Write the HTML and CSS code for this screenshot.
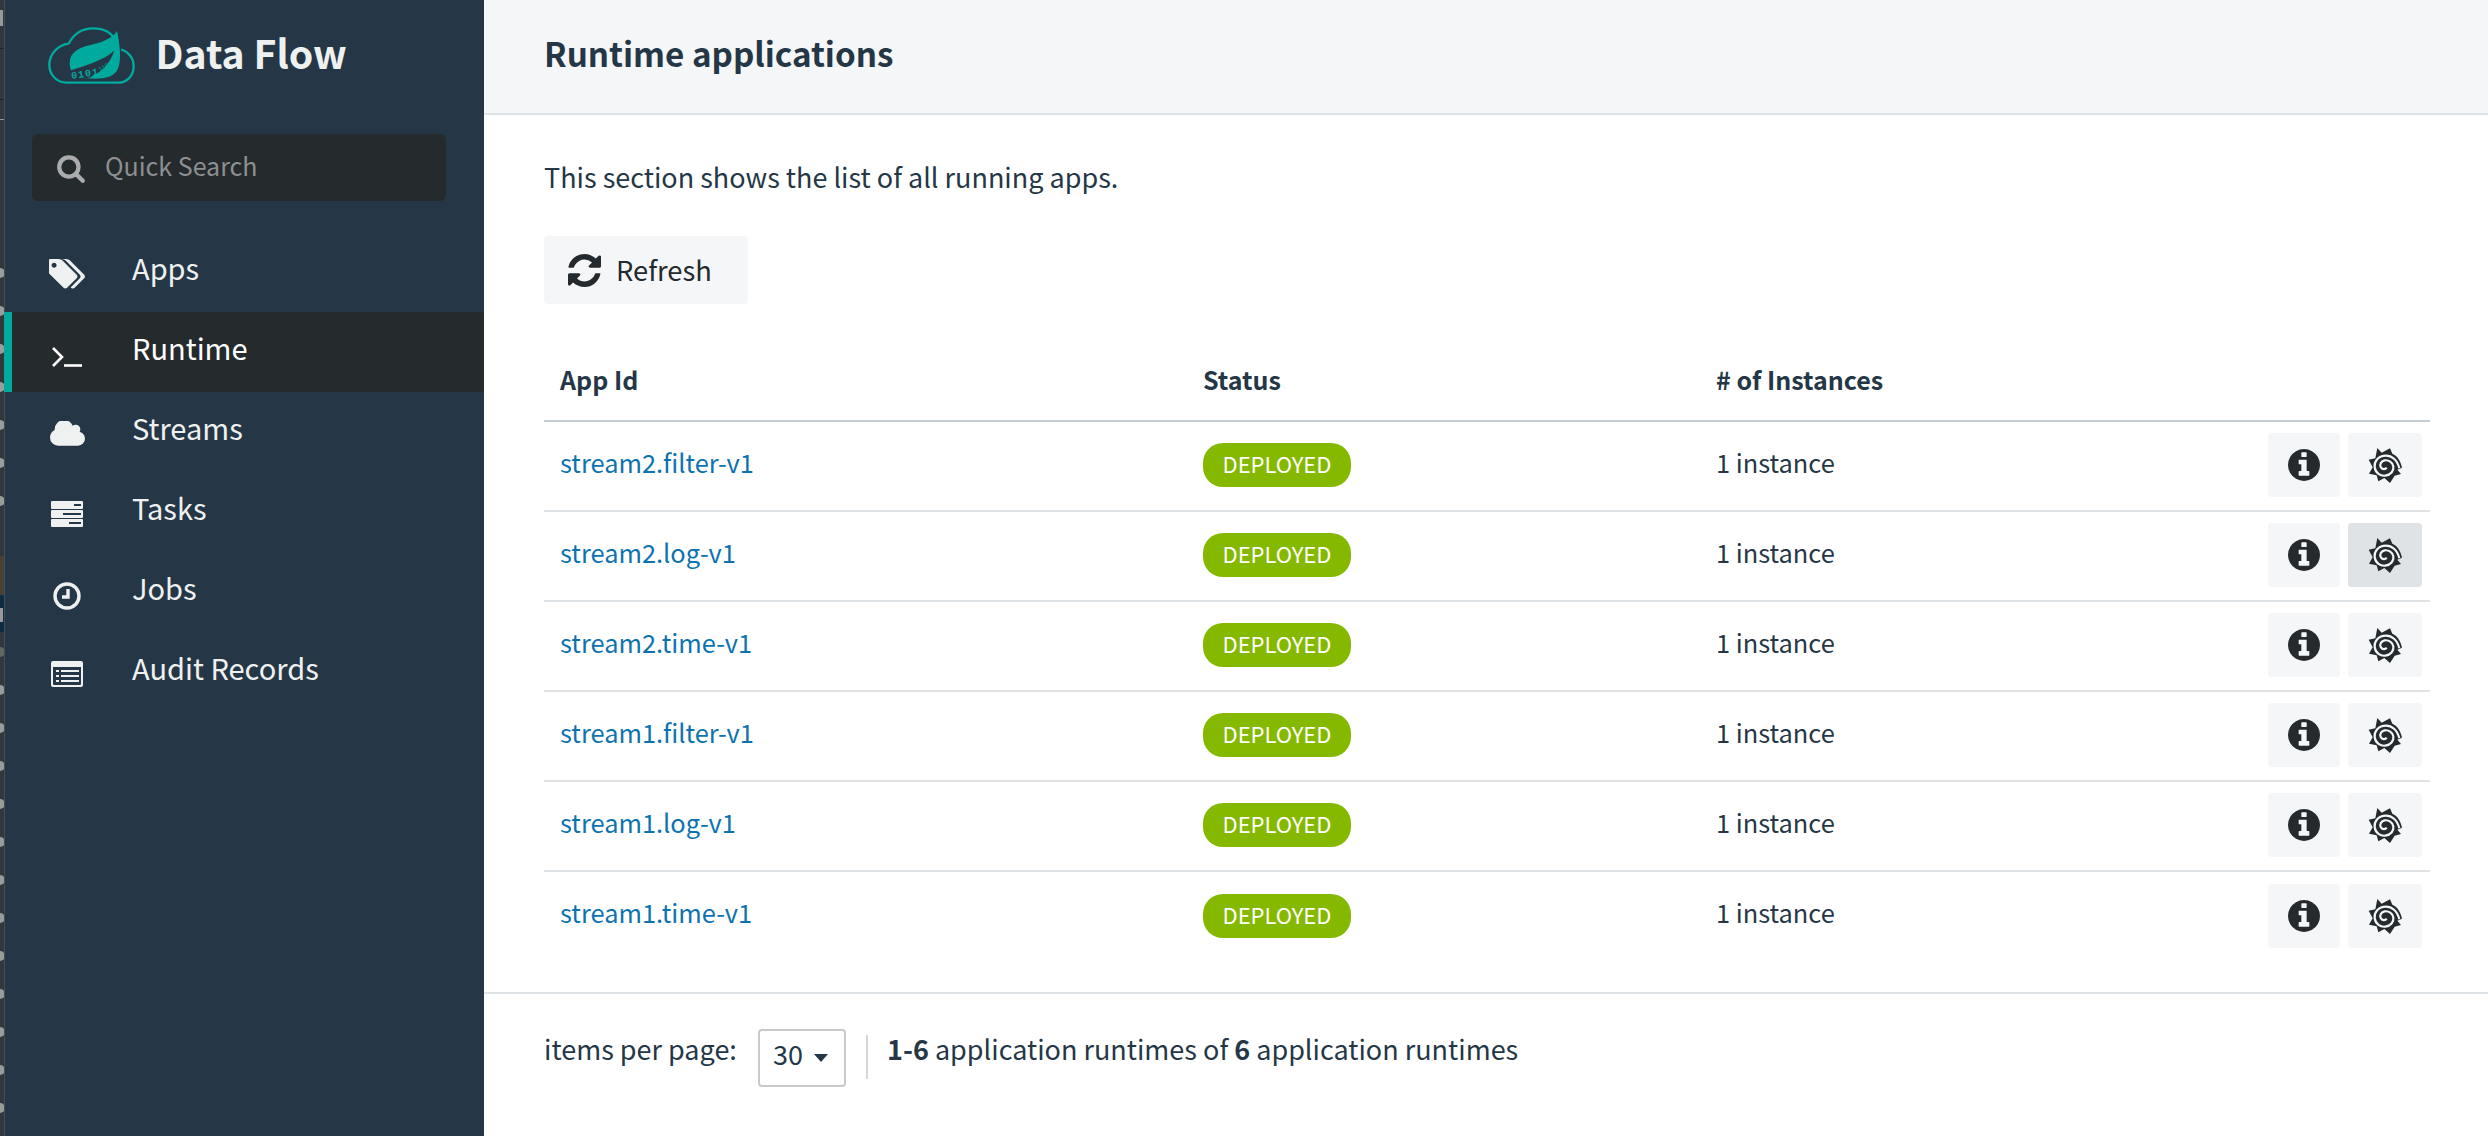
FILE: index.html
```html
<!DOCTYPE html>
<html lang="en">
<head>
<meta charset="utf-8">
<title>Runtime applications</title>
<link rel="stylesheet" href="styles.css">
</head>
<body>
<svg width="0" height="0" class="defs">
  <defs>
    <symbol id="i-info" viewBox="128 128 1536 1536"><path d="M1152 1376v-160q0-14-9-23t-23-9h-96v-512q0-14-9-23t-23-9h-320q-14 0-23 9t-9 23v160q0 14 9 23t23 9h96v320h-96q-14 0-23 9t-9 23v160q0 14 9 23t23 9h448q14 0 23-9t9-23zm-128-896v-160q0-14-9-23t-23-9h-192q-14 0-23 9t-9 23v160q0 14 9 23t23 9h192q14 0 23-9t9-23zm640 416q0 209-103 385.5t-279.5 279.5-385.5 103-385.500-103-279.500-279.500-103-385.500 103-385.500 279.500-279.500 385.500-103 385.500 103 279.500 279.500 103 385.500z"/></symbol>
    <symbol id="i-graf" viewBox="0 0 150 132">
      <path d="M52 15 L65 29 L90 16 L97 32 C112 38 122 54 126 74 L112 80 L123 93 L104 98 L90 120 L73 105 L55 115 L50 97 L27 92 L38 73 L26 50 L46 46 Z"/>
      <path class="spiral" d="M118 76 C112 50 95 38 78 38 C55 38 42 55 44 72 C46 90 62 100 76 98 C92 96 102 84 100 70 C98 58 86 50 74 52 C64 54 58 64 62 72 C66 80 76 80 80 74"/>
    </symbol>
  </defs>
</svg>

<div class="strip">
  <svg class="strip-art" width="4" height="1136" viewBox="0 0 4 1136">
    <rect y="556" width="4" height="39" fill="#4a4134"/>
    <rect y="595" width="4" height="37" fill="#0f2b40"/>
    <rect y="48" width="4" height="1" fill="#222"/>
    <rect y="99" width="4" height="1" fill="#222"/>
    <rect y="119" width="4" height="1" fill="#999"/>
    <rect y="10" width="3" height="16" fill="#999"/>
    <rect y="608" width="3" height="14" fill="#999"/>
    <g fill="#9a9c9c">
      <circle cx="0" cy="273" r="5"/><circle cx="0" cy="311" r="5"/><circle cx="0" cy="349" r="5"/><circle cx="0" cy="387" r="5"/><circle cx="0" cy="425" r="5"/><circle cx="0" cy="463" r="5"/><circle cx="0" cy="501" r="5"/>
      <circle cx="0" cy="652" r="5" fill="#666"/>
      <circle cx="0" cy="690" r="5"/><circle cx="0" cy="728" r="5"/><circle cx="0" cy="766" r="5"/><circle cx="0" cy="804" r="5"/><circle cx="0" cy="842" r="5"/><circle cx="0" cy="880" r="5"/><circle cx="0" cy="918" r="5"/><circle cx="0" cy="956" r="5"/><circle cx="0" cy="994" r="5"/><circle cx="0" cy="1032" r="5"/><circle cx="0" cy="1070" r="5"/><circle cx="0" cy="1108" r="5"/>
    </g>
  </svg>
</div>

<aside class="sidebar">
  <div class="brand">
    <svg class="logo" width="90" height="60" viewBox="140 75 270 180">
      <path class="logo-cloud" d="M205 128 C222 95 250 82 278 82 C310 82 335 95 345 120 M362 146 C385 152 400 172 400 195 C400 225 380 245 352 245 L198 245 C168 245 147 220 147 192 C147 160 172 132 205 128"/>
      <path class="logo-leaf" d="M350 90 C336 114 300 125 270 132 C235 140 208 155 208 185 C208 198 211 208 216 214 L216 235 L262 232 C300 235 340 232 352 205 C365 178 358 130 350 90 Z"/>
      <path class="logo-band" d="M342 148 C320 172 270 190 212 208 L212 238 L262 232 C300 218 330 190 342 148 Z"/>
      <text class="logo-bits" transform="translate(214 234) rotate(-9)">0101</text>
      <text class="logo-bits-small" transform="translate(298 210) rotate(-28)">1100</text>
    </svg>
    <span class="brand-name">Data Flow</span>
  </div>
  <div class="search">
    <svg class="search-icon" viewBox="0 0 1792 1792"><path d="M1216 832q0-185-131.5-316.5t-316.5-131.5-316.5 131.5-131.5 316.5 131.5 316.5 316.5 131.5 316.5-131.5 131.5-316.5zm512 832q0 52-38 90t-90 38q-54 0-90-38l-343-342q-179 124-399 124-143 0-273.5-55.5t-225-150-150-225-55.5-273.5 55.5-273.5 150-225 225-150 273.5-55.5 273.5 55.5 225 150 150 225 55.5 273.5q0 220-124 399l343 343q37 37 37 90z"/></svg>
    <span class="search-text">Quick Search</span>
  </div>
  <nav class="nav">
    <a class="nav-item">
      <span class="nav-icon"><svg width="36" height="30" viewBox="0 128 1835 1536"><path d="M384 448q0-53-37.500-90.500t-90.500-37.500-90.500 37.500-37.500 90.500 37.500 90.500 90.500 37.500 90.500-37.500 37.500-90.500zm1067 576q0 53-37 90l-491 492q-39 37-91 37-53 0-90-37l-715-716q-38-37-64.500-101t-26.500-117v-416q0-52 38-90t90-38h416q53 0 117 26.500t102 64.500l715 714q37 39 37 91zm384 0q0 53-37 90l-491 492q-39 37-91 37-36 0-59-14t-53-45l470-470q37-37 37-90 0-52-37-91l-715-714q-38-38-102-64.500t-117-26.500h224q53 0 117 26.500t102 64.500l715 714q37 39 37 91z"/></svg></span>
      <span class="nav-label">Apps</span>
    </a>
    <a class="nav-item active">
      <span class="nav-icon"><svg class="term" width="30" height="20" viewBox="0 0 30 20"><path d="M1 1 L10 10 L1 19"/><path d="M12 18.500 H30"/></svg></span>
      <span class="nav-label">Runtime</span>
    </a>
    <a class="nav-item">
      <span class="nav-icon"><svg width="35" height="26" viewBox="0 256 1920 1280"><path d="M1920 1152q0 159-112.500 271.500t-271.500 112.500h-1088q-185 0-316.500-131.500t-131.500-316.500q0-132 71-241.500t187-163.500q-2-28-2-43 0-212 150-362t362-150q158 0 286.500 88t187.500 230q70-62 166-62 106 0 181 75t75 181q0 75-41 138 129 30 213 134.500t84 239.500z"/></svg></span>
      <span class="nav-label">Streams</span>
    </a>
    <a class="nav-item">
      <span class="nav-icon"><svg width="32" height="26" viewBox="0 0 32 26"><path fill-rule="evenodd" d="M1 0H31a1 1 0 0 1 1 1V7a1 1 0 0 1-1 1H1a1 1 0 0 1-1-1V1a1 1 0 0 1 1-1ZM23 3V5H30V3ZM1 9H31a1 1 0 0 1 1 1V16a1 1 0 0 1-1 1H1a1 1 0 0 1-1-1V10a1 1 0 0 1 1-1ZM12 12V14H30V12ZM1 18H31a1 1 0 0 1 1 1V25a1 1 0 0 1-1 1H1a1 1 0 0 1-1-1V19a1 1 0 0 1 1-1ZM18 21V23H30V21Z"/></svg></span>
      <span class="nav-label">Tasks</span>
    </a>
    <a class="nav-item">
      <span class="nav-icon"><svg class="clock" width="28" height="28" viewBox="0 0 28 28"><circle cx="14" cy="14" r="12"/><path d="M15 7 V15 H9"/></svg></span>
      <span class="nav-label">Jobs</span>
    </a>
    <a class="nav-item">
      <span class="nav-icon"><svg width="32" height="26" viewBox="0 0 32 26"><path fill-rule="evenodd" d="M2 0H30a2 2 0 0 1 2 2V24a2 2 0 0 1-2 2H2a2 2 0 0 1-2-2V2a2 2 0 0 1 2-2ZM2 6V23a1 1 0 0 0 1 1H29a1 1 0 0 0 1-1V6ZM5 9H8V11H5ZM10 9H28V11H10ZM5 14H8V16H5ZM10 14H28V16H10ZM5 19H8V21H5ZM10 19H28V21H10Z"/></svg></span>
      <span class="nav-label">Audit Records</span>
    </a>
  </nav>
</aside>

<main class="main">
  <header class="page-head"><h1>Runtime applications</h1></header>
  <section class="content">
    <p class="intro">This section shows the list of all running apps.</p>
    <button class="refresh">
      <svg class="refresh-icon" viewBox="128 128 1536 1536"><path d="M1639 1056q0 5-1 7-64 268-268 434.500t-478 166.500q-146 0-282.500-55t-243.500-157l-129 129q-19 19-45 19t-45-19-19-45v-448q0-26 19-45t45-19h448q26 0 45 19t19 45-19 45l-137 137q71 66 161 102t187 36q134 0 250-65t186-179q11-17 53-117 8-23 30-23h192q13 0 22.500 9.500t9.500 22.500zm25-800v448q0 26-19 45t-45 19h-448q-26 0-45-19t-19-45 19-45l138-138q-148-137-349-137-134 0-250 65t-186 179q-11 17-53 117-8 23-30 23h-199q-13 0-22.500-9.500t-9.500-22.500v-7q65-268 270-434.500t480-166.500q146 0 284 55.500t245 156.500l130-129q19-19 45-19t45 19 19 45z"/></svg>
      <span class="refresh-text">Refresh</span>
    </button>
    <table class="apps">
      <thead>
        <tr><th class="c-id">App Id</th><th class="c-status">Status</th><th class="c-inst"># of Instances</th><th class="c-act"></th></tr>
      </thead>
      <tbody>
        <tr>
          <td><a class="cell-text app-link">stream2.filter-v1</a></td><td><span class="badge">DEPLOYED</span></td><td><span class="cell-text">1 instance</span></td>
          <td class="c-act"><div class="actions"><button class="act act-info"><svg class="ic-info"><use href="#i-info"/></svg></button><button class="act act-graf"><svg class="ic-graf"><use href="#i-graf"/></svg></button></div></td>
        </tr>
        <tr>
          <td><a class="cell-text app-link">stream2.log-v1</a></td><td><span class="badge">DEPLOYED</span></td><td><span class="cell-text">1 instance</span></td>
          <td class="c-act"><div class="actions"><button class="act act-info"><svg class="ic-info"><use href="#i-info"/></svg></button><button class="act act-graf hover"><svg class="ic-graf"><use href="#i-graf"/></svg></button></div></td>
        </tr>
        <tr>
          <td><a class="cell-text app-link">stream2.time-v1</a></td><td><span class="badge">DEPLOYED</span></td><td><span class="cell-text">1 instance</span></td>
          <td class="c-act"><div class="actions"><button class="act act-info"><svg class="ic-info"><use href="#i-info"/></svg></button><button class="act act-graf"><svg class="ic-graf"><use href="#i-graf"/></svg></button></div></td>
        </tr>
        <tr>
          <td><a class="cell-text app-link">stream1.filter-v1</a></td><td><span class="badge">DEPLOYED</span></td><td><span class="cell-text">1 instance</span></td>
          <td class="c-act"><div class="actions"><button class="act act-info"><svg class="ic-info"><use href="#i-info"/></svg></button><button class="act act-graf"><svg class="ic-graf"><use href="#i-graf"/></svg></button></div></td>
        </tr>
        <tr>
          <td><a class="cell-text app-link">stream1.log-v1</a></td><td><span class="badge">DEPLOYED</span></td><td><span class="cell-text">1 instance</span></td>
          <td class="c-act"><div class="actions"><button class="act act-info"><svg class="ic-info"><use href="#i-info"/></svg></button><button class="act act-graf"><svg class="ic-graf"><use href="#i-graf"/></svg></button></div></td>
        </tr>
        <tr>
          <td><a class="cell-text app-link">stream1.time-v1</a></td><td><span class="badge">DEPLOYED</span></td><td><span class="cell-text">1 instance</span></td>
          <td class="c-act"><div class="actions"><button class="act act-info"><svg class="ic-info"><use href="#i-info"/></svg></button><button class="act act-graf"><svg class="ic-graf"><use href="#i-graf"/></svg></button></div></td>
        </tr>
      </tbody>
    </table>
  </section>
  <footer class="pager">
    <span class="pager-text per-page">items per page:</span>
    <div class="select"><span class="select-value">30</span><i class="caret"></i></div>
    <div class="pager-sep"></div>
    <span class="pager-text summary"><b>1-6</b> application runtimes of <b>6</b> application runtimes</span>
  </footer>
</main>
</body>
</html>
```
FILE: styles.css
```css
* { box-sizing: border-box; }
html, body { margin: 0; height: 100%; }
body {
  display: flex;
  height: 1136px;
  overflow: hidden;
  background: #fff;
  color: #253746;
  font-family: "Noto Sans CJK SC", "Noto Sans", sans-serif;
  font-size: 26px;
  line-height: 36px;
}
.defs { position: absolute; }
.strip { width: 4px; flex: none; background: #32383a; }
.strip-art { display: block; }

.sidebar {
  width: 480px;
  flex: none;
  background: #253746;
  border-left: 1px solid #3c505e;
  color: #eff1f1;
}
.brand { display: flex; align-items: center; height: 114px; padding-left: 42px; }
.logo { display: block; flex: none; margin-bottom: 3px; }
.logo-cloud { fill: none; stroke: #00ab9e; stroke-width: 7; }
.logo-leaf { fill: #00ab9e; }
.logo-band { fill: #253746; }
.logo-bits { fill: #00ab9e; font-family: "Liberation Mono", monospace; font-size: 30px; font-weight: 700; letter-spacing: 3px; }
.logo-bits-small { fill: #00ab9e; font-family: "Liberation Mono", monospace; font-size: 17px; }
.brand-name { margin-left: 18.5px; font-size: 39.2px; font-weight: 700; line-height: 50px; margin-bottom: 11px; }

.search {
  display: flex;
  align-items: center;
  margin: 20px 0 0 27px;
  width: 414px;
  height: 67px;
  padding-left: 24px;
  background: #252a2d;
  border-radius: 6px;
  color: #8d9092;
  font-size: 25px;
}
.search-icon { width: 30px; height: 30px; fill: #a9abac; margin-right: 19px; flex: none; }
.search-text { margin-bottom: 6px; }

.nav { display: flex; flex-direction: column; margin-top: 31px; margin-left: -1px; }
.nav-item {
  display: flex;
  align-items: center;
  height: 80px;
  padding-left: 8px;
  font-size: 29px;
  line-height: 40px;
  border-left: 8px solid transparent;
}
.nav-item.active { background: #252a2d; border-left-color: #00ab9e; color: #fff; }
.nav-icon { display: flex; align-items: center; justify-content: center; width: 72px; margin-left: 11px; margin-right: 29px; margin-top: 4px; flex: none; }
.nav-label { margin-bottom: 10px; }
.nav-icon svg { display: block; fill: #eff1f1; }
.nav-icon .term { fill: none; stroke: #fff; stroke-width: 2.6; margin-top: 5px; }
.nav-icon .clock { fill: none; stroke: #eff1f1; stroke-width: 3.4; margin-top: 4px; }

.main { flex: 1; min-width: 0; display: flex; flex-direction: column; }
.page-head {
  height: 115px;
  flex: none;
  display: flex;
  align-items: center;
  padding-left: 60px;
  background: #f4f6f7;
  border-bottom: 2px solid #dfe3e6;
}
.page-head h1 { margin: 0 0 7px; font-size: 33.2px; line-height: 50px; font-weight: 700; color: #253746; }
.content { flex: none; height: 879px; padding: 43px 58px 0 60px; border-bottom: 2px solid #dfe3e6; }
.intro { margin: 0; font-size: 27px; line-height: 38px; }
.refresh {
  display: flex;
  align-items: center;
  gap: 15px;
  height: 68px;
  width: 204px;
  margin-top: 40px;
  padding: 0 0 0 24px;
  border: 0;
  border-radius: 4px;
  background: #f4f6f7;
  color: #242a2d;
  font: inherit;
  font-size: 27.3px;
}
.refresh-icon { width: 33px; height: 33px; fill: #242a2d; flex: none; }
.refresh-text { margin-bottom: 3px; }

.apps { width: 100%; margin-top: 24px; border-collapse: collapse; table-layout: fixed; font-size: 25.4px; }
.apps th {
  height: 93px;
  padding: 10px 0 0 16px;
  text-align: left;
  font-weight: 700;
  font-size: 25px;
  border-bottom: 2px solid #c3cdd1;
}
.apps td { height: 90px; padding: 0 0 2px 16px; border-top: 2px solid #dfe3e6; }
.apps tbody tr:first-child td { border-top: 0; }
.c-id { width: 643px; }
.c-status { width: 513px; }
.c-inst { width: 340px; }
.cell-text { display: block; margin-bottom: 7px; }
.app-link { color: #0d73b0; }
.badge {
  display: block;
  width: 148px;
  height: 44px;
  border-radius: 20px;
  background: #85b900;
  color: #fff;
  font-size: 22px;
  line-height: 41px;
  text-align: center;
}
.apps td.c-act { padding: 0 8px 2px 0; }
.actions { display: flex; justify-content: flex-end; gap: 8px; }
.act {
  display: flex;
  align-items: center;
  justify-content: center;
  height: 64px;
  padding: 0;
  border: 0;
  border-radius: 4px;
  background: #f4f6f7;
}
.act-info { width: 72px; }
.act-graf { width: 74px; }
.act-graf.hover { background: #dfe3e6; }
.ic-info { width: 32px; height: 32px; fill: #242a2d; }
.ic-graf { width: 50px; height: 44px; fill: #242a2d; }
.spiral { fill: none; stroke: #f4f6f7; stroke-width: 6.5; }
.hover .spiral { stroke: #dfe3e6; }

.pager { flex: 1; display: flex; align-items: center; padding: 0 0 14px 60px; font-size: 27px; }
.pager-text { margin-bottom: 18px; }
.per-page { width: 214px; }
.select {
  display: flex;
  align-items: center;
  width: 88px;
  height: 58px;
  padding-left: 13px;
  border: 2px solid #c9c9c9;
  border-radius: 4px;
  font-size: 27px;
}
.select-value { margin-bottom: 8px; }
.caret { margin-left: 11px; border: 7.5px solid transparent; border-top: 8px solid #253746; border-bottom: 0; }
.pager-sep { width: 2px; height: 44px; margin-left: 20px; margin-right: 19px; margin-bottom: 2px; background: #d6d6d6; }
.summary b { font-weight: 700; }
```
